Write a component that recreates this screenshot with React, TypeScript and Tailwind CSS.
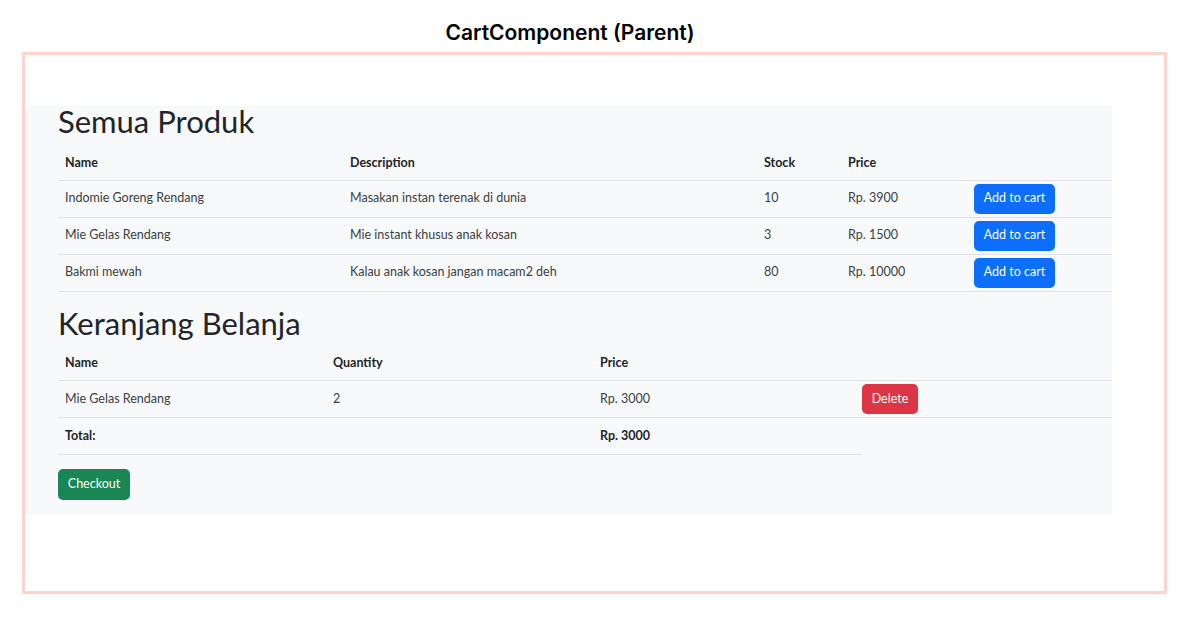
import React from "react";

interface Product {
  name: string;
  description: string;
  stock: number;
  price: number;
}

interface CartItem {
  name: string;
  quantity: number;
  price: number;
}

const products: Product[] = [
  { name: "Indomie Goreng Rendang", description: "Masakan instan terenak di dunia", stock: 10, price: 3900 },
  { name: "Mie Gelas Rendang", description: "Mie instant khusus anak kosan", stock: 3, price: 1500 },
  { name: "Bakmi mewah", description: "Kalau anak kosan jangan macam2 deh", stock: 80, price: 10000 },
];

const cart: CartItem[] = [{ name: "Mie Gelas Rendang", quantity: 2, price: 3000 }];

const th = "px-[7px] pt-[4px] h-[37px] text-left font-bold text-[12.5px] text-[#212529] border-b border-[#dee2e6]";
const td = "px-[7px] h-[37px] text-[12.5px] text-[#3a3f44] border-b border-[#dee2e6]";

export default function App() {
  const total = cart.reduce((sum, item) => sum + item.price, 0);

  return (
    <div className="w-[1191px] h-[627px] bg-white font-['Lato','Noto_Sans',sans-serif]">
      {/* judul frame */}
      <div className="w-[1140px] pt-[21px] text-center font-['Inter',sans-serif] font-semibold text-[21px] leading-[24px] text-black">
        CartComponent (Parent)
      </div>

      <div className="ml-[22px] mt-[7px] w-[1145px] h-[542px] border-[3px] border-[#ffd3cf] pt-[51px]">
        <div className="w-[1087px] bg-[#f8f9fa] pl-[33px] pb-[15px]">
          <h2 className="text-[31px] leading-[30px] text-[#212529] mb-[7px]">Semua Produk</h2>
          <table className="w-[1054px] border-collapse">
            <thead>
              <tr>
                <th className={`${th} w-[285px]`}>Name</th>
                <th className={`${th} w-[414px]`}>Description</th>
                <th className={`${th} w-[84px]`}>Stock</th>
                <th className={`${th} w-[126px]`}>Price</th>
                <th className={th}></th>
              </tr>
            </thead>
            <tbody>
              {products.map((p) => (
                <tr key={p.name}>
                  <td className={td}>{p.name}</td>
                  <td className={td}>{p.description}</td>
                  <td className={td}>{p.stock}</td>
                  <td className={td}>Rp. {p.price}</td>
                  <td className={td}>
                    <button className="h-[30px] w-[81px] rounded-[5px] bg-[#0d6efd] text-white text-[12.5px]">
                      Add to cart
                    </button>
                  </td>
                </tr>
              ))}
            </tbody>
          </table>

          <h2 className="text-[31px] leading-[30px] text-[#212529] mt-[16px] mb-[6px]">Keranjang Belanja</h2>
          <table className="w-[1054px] border-collapse">
            <thead>
              <tr>
                <th className={`${th} w-[268px]`}>Name</th>
                <th className={`${th} w-[267px]`}>Quantity</th>
                <th className={`${th} w-[268px]`}>Price</th>
                <th className={th}></th>
              </tr>
            </thead>
            <tbody>
              {cart.map((item) => (
                <tr key={item.name}>
                  <td className={td}>{item.name}</td>
                  <td className={td}>{item.quantity}</td>
                  <td className={td}>Rp. {item.price}</td>
                  <td className={`${td} !px-px`}>
                    <button className="h-[30px] w-[56px] rounded-[5px] bg-[#dc3545] text-white text-[12.5px]">
                      Delete
                    </button>
                  </td>
                </tr>
              ))}
              <tr>
                <td className={`${td} font-bold text-[#212529]`}>Total:</td>
                <td className={td}></td>
                <td className={`${td} font-bold text-[#212529]`}>Rp. {total}</td>
              </tr>
            </tbody>
          </table>

          <button className="mt-[14px] h-[31px] w-[72px] rounded-[5px] bg-[#198754] text-white text-[12.5px]">
            Checkout
          </button>
        </div>
      </div>
    </div>
  );
}
